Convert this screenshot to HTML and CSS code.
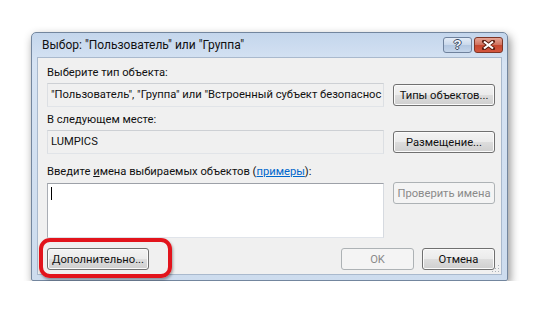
FILE: index.html
```html
<!DOCTYPE html>
<html lang="ru">
<head>
    <meta charset="UTF-8">
    <title>Выбор: "Пользователь" или "Группа"</title>
    <link rel="stylesheet" href="styles.css">
</head>
<body>
    <div class="page">
        <div class="window">
            <div class="titlebar">
                <span class="title">Выбор: "Пользователь" или "Группа"</span>
                <div class="caption-buttons">
                    <div class="cap-btn help">?</div>
                    <div class="cap-btn close">
                        <svg width="15" height="10" viewBox="0 0 15 10">
                            <path d="M3 1.5 L12 8.5 M12 1.5 L3 8.5" stroke="#5a1c10" stroke-width="4" stroke-linecap="round"/>
                            <path d="M3 1.5 L12 8.5 M12 1.5 L3 8.5" stroke="#fff" stroke-width="2.2"/>
                        </svg>
                    </div>
                </div>
            </div>

            <div class="client">
                <div class="label">Выберите тип объекта:</div>
                <div class="row">
                    <div class="field">"Пользователь", "Группа" или "Встроенный субъект безопаснос</div>
                    <button class="btn">Типы объектов...</button>
                </div>

                <div class="label second">В следующем месте:</div>
                <div class="row">
                    <div class="field">LUMPICS</div>
                    <button class="btn">Размещение...</button>
                </div>

                <div class="label third">Введите <u>и</u>мена выбираемых объектов (<a class="link" href="#">примеры</a>):</div>
                <div class="row top">
                    <div class="names"><span class="caret"></span></div>
                    <button class="btn disabled">Проверить имена</button>
                </div>

                <div class="bottom-row">
                    <button class="btn wide">Дополнительно...</button>
                    <div class="spacer"></div>
                    <button class="btn small disabled">OK</button>
                    <button class="btn small">Отмена</button>
                </div>

                <svg class="grip" width="8" height="8" viewBox="0 0 8 8">
                    <rect x="6" y="0" width="1" height="1" fill="#a9b0b8"/>
                    <rect x="3" y="3" width="1" height="1" fill="#a9b0b8"/>
                    <rect x="6" y="3" width="1" height="1" fill="#a9b0b8"/>
                    <rect x="0" y="6" width="1" height="1" fill="#a9b0b8"/>
                    <rect x="3" y="6" width="1" height="1" fill="#a9b0b8"/>
                    <rect x="6" y="6" width="1" height="1" fill="#a9b0b8"/>
                </svg>
            </div>

            <div class="highlight"></div>
        </div>
    </div>
</body>
</html>
```

FILE: styles.css
```css
body {
    margin: 0;
    background-color: #fff;
    font-family: Roboto, "Liberation Sans", sans-serif;
    font-size: 11.2px;
    color: #111;
}

.page {
    padding: 32px 0 0 31px;
}

.window {
    width: 477px;
    height: 249px;
    box-sizing: border-box;
    border: 1px solid #73869e;
    border-radius: 5px 5px 2px 2px;
    background: linear-gradient(#c4d6ec, #d6e3f3 30px, #cddcee);
    box-shadow: 2px 4px 10px rgba(0, 0, 0, 0.45);
    display: flex;
    flex-direction: column;
    position: relative;
}

.titlebar {
    height: 24px;
    display: flex;
    align-items: center;
    padding: 0 4px 0 10px;
}

.title {
    flex: 1;
    font-size: 12px;
    color: #111;
}

.caption-buttons {
    display: flex;
    gap: 2px;
    align-self: flex-start;
    margin-top: 4px;
}

.cap-btn {
    width: 29px;
    height: 16px;
    box-sizing: border-box;
    border-radius: 3px;
    display: flex;
    align-items: center;
    justify-content: center;
}

.help {
    border: 1px solid #6f829d;
    background: linear-gradient(#e4ecf7, #c9d8eb 50%, #b3c7e1 51%, #c4d5ea);
    color: #f4f7fb;
    font-family: "Liberation Sans", sans-serif;
    font-weight: bold;
    font-size: 13px;
    line-height: 14px;
    text-shadow: 1px 0 0 #3a4a62, -1px 0 0 #3a4a62, 0 1px 0 #3a4a62, 0 -1px 0 #3a4a62;
}

.close {
    border: 1px solid #7d3526;
    background: linear-gradient(#e6a595, #cf6f5c 50%, #c4462f 51%, #d4563d);
}

.client {
    flex: 1;
    margin: 0 5px 5px;
    background-color: #f0f0f0;
    border: 1px solid #a9b9cd;
    padding: 7px 6px 0 9px;
    display: flex;
    flex-direction: column;
    position: relative;
}

.label {
    line-height: 15px;
}

.label.second {
    margin-top: 5px;
}

.label.third {
    margin-top: 10px;
}

.link {
    color: #0066cc;
}

.row {
    display: flex;
    align-items: center;
    gap: 9px;
    margin-top: 3px;
}

.row.top {
    align-items: flex-start;
}

.field {
    width: 337px;
    height: 24px;
    box-sizing: border-box;
    border: 1px solid;
    border-color: #cdd0d4 #dcdfe3 #e1e4e8 #dcdfe3;
    background-color: #f0f0f0;
    padding: 0 3px;
    line-height: 22px;
    overflow: hidden;
    white-space: nowrap;
}

.names {
    width: 337px;
    height: 55px;
    box-sizing: border-box;
    border: 1px solid;
    border-color: #9da1a8 #d6dae0 #e0e4ea #a9adb4;
    background-color: #fff;
    margin-top: 1px;
}

.caret {
    display: block;
    width: 1px;
    height: 13px;
    background-color: #000;
    margin: 3px 0 0 3px;
}

.btn {
    font-family: inherit;
    font-size: 11.2px;
    width: 102px;
    height: 22px;
    padding: 0;
    border: 1px solid #707070;
    border-radius: 3px;
    background: linear-gradient(#f3f3f3, #ebebeb 50%, #dddddd 51%, #cfcfcf);
    box-shadow: inset 0 0 0 1px #fbfbfb;
    color: #111;
}

.btn.disabled {
    border-color: #adb2b5;
    background: #f4f4f4;
    box-shadow: none;
    color: #8a8a8a;
}

.bottom-row {
    display: flex;
    gap: 8px;
    margin-top: 10px;
}

.spacer {
    flex: 1;
}

.btn.small {
    width: 73px;
}

.grip {
    position: absolute;
    right: 1px;
    bottom: 1px;
}

.highlight {
    position: absolute;
    left: 7px;
    top: 205px;
    width: 133px;
    height: 40px;
    box-sizing: border-box;
    border: 4px solid #e2141c;
    border-radius: 11px;
    box-shadow: 1px 2px 3px rgba(0, 0, 0, 0.35);
}
```
